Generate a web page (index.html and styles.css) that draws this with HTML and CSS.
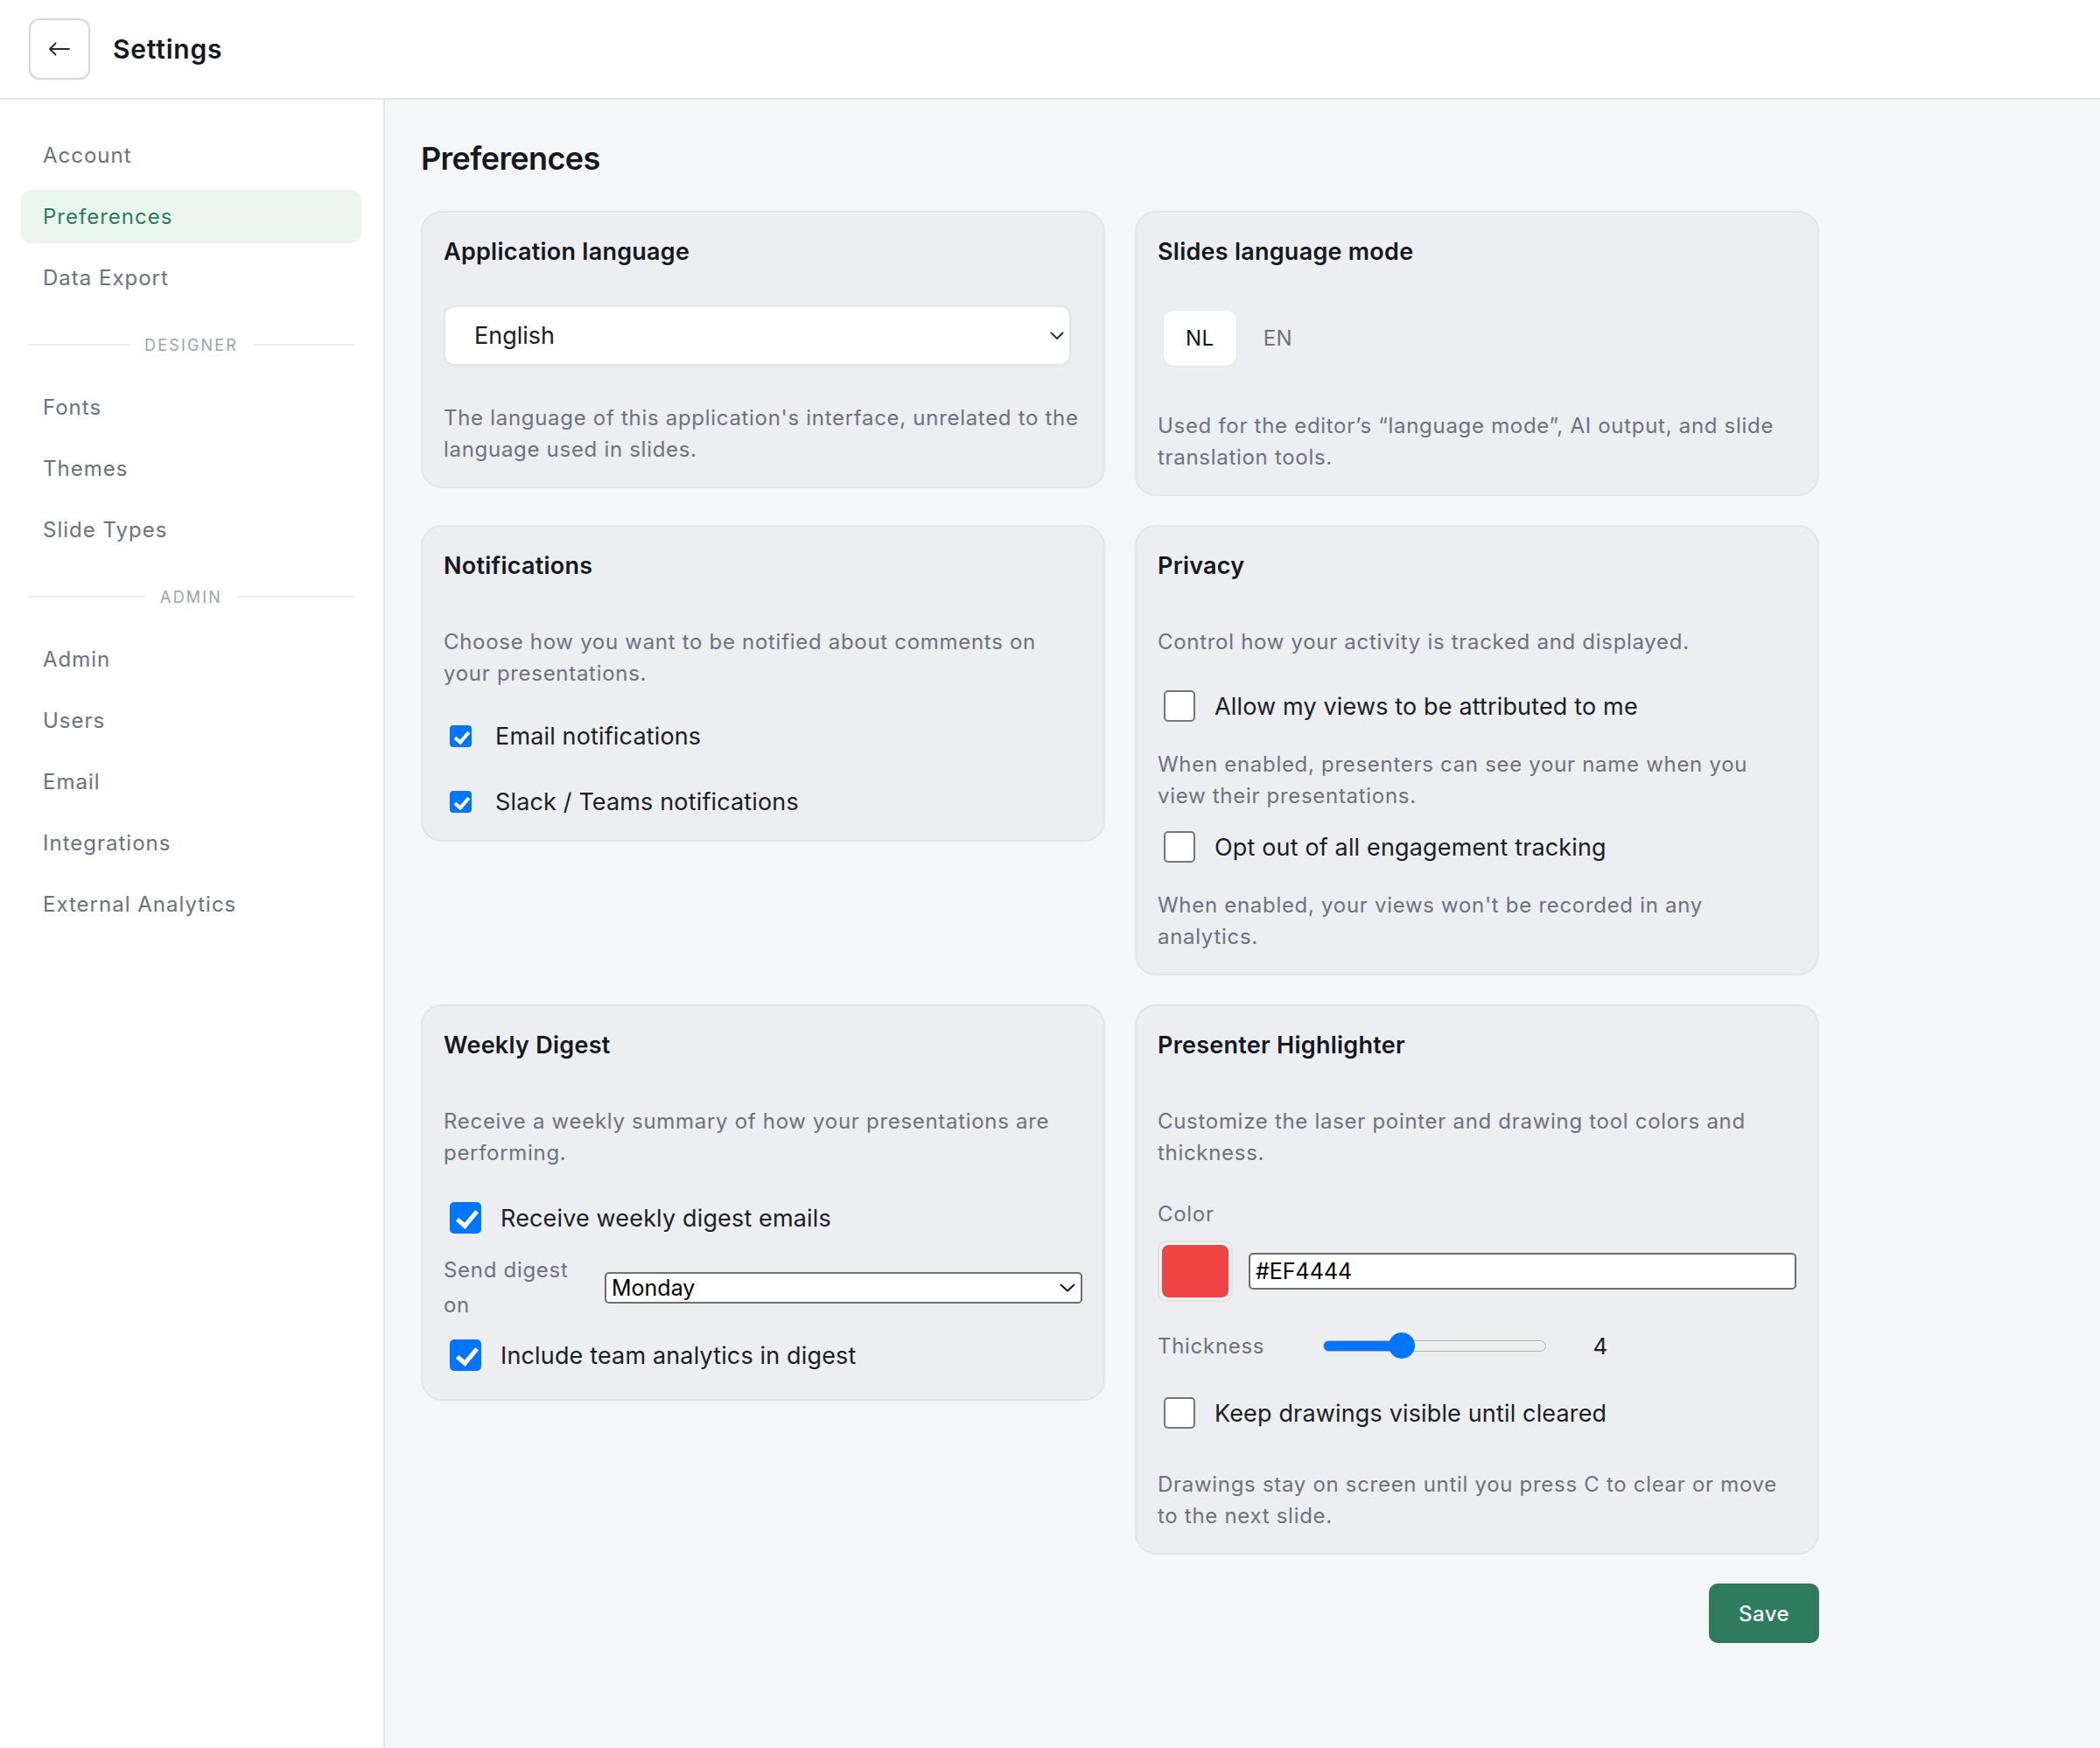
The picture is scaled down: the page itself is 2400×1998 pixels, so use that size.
FILE: index.html
```html
<!DOCTYPE html>
<html lang="en">
<head>
    <meta charset="UTF-8">
    <meta name="viewport" content="width=device-width, initial-scale=1.0">
    <title>Settings</title>
    <link rel="stylesheet" href="styles.css">
</head>
<body>
    <header class="topbar">
        <button class="back-btn" aria-label="Back">
            <svg width="26" height="16" viewBox="0 0 26 16" fill="none" stroke="#1f2937" stroke-width="1.8" stroke-linecap="round" stroke-linejoin="round">
                <path d="M24 8H2M8.5 1.5L2 8l6.5 6.5"/>
            </svg>
        </button>
        <h1 class="topbar-title">Settings</h1>
    </header>

    <div class="layout">
        <nav class="sidebar">
            <a class="nav-item">Account</a>
            <a class="nav-item active">Preferences</a>
            <a class="nav-item">Data Export</a>

            <div class="nav-divider"><span>Designer</span></div>

            <a class="nav-item">Fonts</a>
            <a class="nav-item">Themes</a>
            <a class="nav-item">Slide Types</a>

            <div class="nav-divider"><span>Admin</span></div>

            <a class="nav-item">Admin</a>
            <a class="nav-item">Users</a>
            <a class="nav-item">Email</a>
            <a class="nav-item">Integrations</a>
            <a class="nav-item">External Analytics</a>
        </nav>

        <main class="main">
            <div class="content">
                <h2 class="page-title">Preferences</h2>

                <div class="card-grid">
                    <!-- Application language -->
                    <section class="card">
                        <h3 class="card-title">Application language</h3>
                        <div class="select-wrap lang-select">
                            <select class="select-soft">
                                <option>English</option>
                                <option>Nederlands</option>
                            </select>
                            <svg class="chevron" width="16" height="10" viewBox="0 0 16 10" fill="none" stroke="#1f2937" stroke-width="1.8" stroke-linecap="round" stroke-linejoin="round"><path d="M1.5 1.5L8 8l6.5-6.5"/></svg>
                        </div>
                        <p class="card-desc after-select">The language of this application's interface, unrelated to the language used in slides.</p>
                    </section>

                    <!-- Slides language mode -->
                    <section class="card">
                        <h3 class="card-title">Slides language mode</h3>
                        <div class="toggle">
                            <button class="toggle-btn active">NL</button>
                            <button class="toggle-btn">EN</button>
                        </div>
                        <p class="card-desc after-toggle">Used for the editor’s “language mode”, AI output, and slide translation tools.</p>
                    </section>

                    <!-- Notifications -->
                    <section class="card">
                        <h3 class="card-title">Notifications</h3>
                        <p class="card-desc intro">Choose how you want to be notified about comments on your presentations.</p>
                        <label class="check-row small first">
                            <input type="checkbox" class="check" checked>
                            <span>Email notifications</span>
                        </label>
                        <label class="check-row small next">
                            <input type="checkbox" class="check" checked>
                            <span>Slack / Teams notifications</span>
                        </label>
                    </section>

                    <!-- Privacy -->
                    <section class="card">
                        <h3 class="card-title">Privacy</h3>
                        <p class="card-desc intro">Control how your activity is tracked and displayed.</p>
                        <label class="check-row privacy-first">
                            <input type="checkbox" class="check">
                            <span>Allow my views to be attributed to me</span>
                        </label>
                        <p class="card-desc option-help">When enabled, presenters can see your name when you view their presentations.</p>
                        <label class="check-row privacy-next">
                            <input type="checkbox" class="check">
                            <span>Opt out of all engagement tracking</span>
                        </label>
                        <p class="card-desc option-help">When enabled, your views won't be recorded in any analytics.</p>
                    </section>

                    <!-- Weekly Digest -->
                    <section class="card">
                        <h3 class="card-title">Weekly Digest</h3>
                        <p class="card-desc intro">Receive a weekly summary of how your presentations are performing.</p>
                        <label class="check-row tall digest-first">
                            <input type="checkbox" class="check" checked>
                            <span>Receive weekly digest emails</span>
                        </label>
                        <div class="field-row digest-day">
                            <span class="field-label">Send digest on</span>
                            <div class="select-wrap plain">
                                <select class="select-plain">
                                    <option>Monday</option>
                                    <option>Tuesday</option>
                                    <option>Wednesday</option>
                                    <option>Thursday</option>
                                    <option>Friday</option>
                                </select>
                                <svg class="chevron" width="18" height="10" viewBox="0 0 18 10" fill="none" stroke="#111" stroke-width="1.8" stroke-linecap="round" stroke-linejoin="round"><path d="M1.5 1.5L9 8.5l7.5-7"/></svg>
                            </div>
                        </div>
                        <label class="check-row tall digest-next">
                            <input type="checkbox" class="check" checked>
                            <span>Include team analytics in digest</span>
                        </label>
                    </section>

                    <!-- Presenter Highlighter -->
                    <section class="card">
                        <h3 class="card-title">Presenter Highlighter</h3>
                        <p class="card-desc intro">Customize the laser pointer and drawing tool colors and thickness.</p>
                        <div class="color-label">Color</div>
                        <div class="color-row">
                            <div class="swatch"><div class="swatch-fill"></div></div>
                            <input type="text" class="hex-input" value="#EF4444">
                        </div>
                        <div class="thickness-row">
                            <span class="thickness-label">Thickness</span>
                            <input type="range" class="range" min="1" max="10" value="4" style="--fill: 35%">
                            <span class="thickness-value">4</span>
                        </div>
                        <label class="check-row keep-row">
                            <input type="checkbox" class="check">
                            <span>Keep drawings visible until cleared</span>
                        </label>
                        <p class="card-desc keep-help">Drawings stay on screen until you press C to clear or move to the next slide.</p>
                    </section>
                </div>

                <div class="actions">
                    <button class="save-btn">Save</button>
                </div>
            </div>
        </main>
    </div>
</body>
</html>
```

FILE: styles.css
```css
:root {
    --text-dark: #15181e;
    --text-muted: #6b7280;
    --nav-text: #6b7280;
    --line: #e4e6ea;
    --main-bg: #f5f6f8;
    --card-bg: #edeef2;
    --card-border: #e2e4e8;
    --green: #2e7b5f;
    --green-soft: #ebf5f0;
    --blue: #0075ff;
}

* {
    box-sizing: border-box;
}

html, body {
    margin: 0;
    padding: 0;
    height: 100%;
}

body {
    font-family: 'Inter', 'Noto Sans', Arial, sans-serif;
    color: var(--text-dark);
    background: var(--main-bg);
    display: flex;
    flex-direction: column;
}

/* top bar */
.topbar {
    height: 114px;
    flex-shrink: 0;
    background: #fff;
    border-bottom: 2px solid var(--line);
    display: flex;
    align-items: center;
    padding: 0 33px;
    gap: 26px;
}

.back-btn {
    width: 70px;
    height: 70px;
    border: 2px solid #d5d8dd;
    border-radius: 12px;
    background: #fff;
    display: flex;
    align-items: center;
    justify-content: center;
    box-shadow: 0 1px 2px rgba(0, 0, 0, 0.05);
    padding: 0;
}

.topbar-title {
    margin: 0;
    font-size: 30px;
    font-weight: 600;
    letter-spacing: 0.8px;
    color: var(--text-dark);
}

.layout {
    flex: 1;
    display: flex;
    min-height: 0;
}

/* sidebar */
.sidebar {
    width: 440px;
    flex-shrink: 0;
    background: #fff;
    border-right: 2px solid var(--line);
    padding: 33px 25px 0 24px;
    display: flex;
    flex-direction: column;
}

.nav-item {
    height: 61px;
    margin-bottom: 9px;
    padding-left: 25px;
    display: flex;
    align-items: center;
    font-size: 24px;
    letter-spacing: 1px;
    color: var(--nav-text);
    border-radius: 12px;
}

.nav-item.active {
    background: var(--green-soft);
    color: var(--green);
}

.nav-divider {
    height: 24px;
    margin: 25px 8px 29px;
    display: flex;
    align-items: center;
    gap: 17px;
    font-size: 18px;
    letter-spacing: 0.12em;
    text-transform: uppercase;
    color: #9ca3af;
}

.nav-divider::before,
.nav-divider::after {
    content: "";
    flex: 1;
    height: 2px;
    background: #eceef1;
}

/* main */
.main {
    flex: 1;
    padding: 44px 41px;
}

.content {
    width: 1598px;
}

.page-title {
    margin: 0 0 36px;
    font-size: 36px;
    line-height: 47px;
    font-weight: 600;
    letter-spacing: -0.6px;
    color: var(--text-dark);
}

.card-grid {
    display: grid;
    grid-template-columns: 1fr 1fr;
    gap: 33px 34px;
    align-items: start;
}

.card {
    background: var(--card-bg);
    border: 2px solid var(--card-border);
    border-radius: 24px;
    padding: 25px 24px 24px;
}

.card-title {
    margin: 0;
    font-size: 27px;
    line-height: 40px;
    font-weight: 600;
    letter-spacing: 0.25px;
    color: var(--text-dark);
}

.card-desc {
    margin: 0;
    font-size: 24px;
    line-height: 36px;
    letter-spacing: 0.7px;
    color: var(--text-muted);
}

.card-desc.intro { margin-top: 49px; }
.card-desc.after-select { margin-top: 42px; }
.card-desc.after-toggle { margin-top: 51px; }
.card-desc.option-help { margin-top: 29px; }
.card-desc.keep-help { margin-top: 44px; }

/* selects */
.select-wrap {
    position: relative;
}

.select-wrap .chevron {
    position: absolute;
    right: 8px;
    top: 50%;
    transform: translateY(-50%);
    pointer-events: none;
}

.lang-select {
    margin-top: 41px;
    width: 717px;
}

.select-soft {
    appearance: none;
    -webkit-appearance: none;
    width: 100%;
    height: 69px;
    padding: 0 40px 0 33px;
    font-family: inherit;
    font-size: 27px;
    color: #1b1e24;
    background: #fff;
    border: 2px solid #e4e6ea;
    border-radius: 12px;
    box-shadow: 0 1px 3px rgba(0, 0, 0, 0.04);
}

.select-plain {
    appearance: none;
    -webkit-appearance: none;
    width: 100%;
    height: 36px;
    padding: 0 34px 0 6px;
    font-family: inherit;
    font-size: 25px;
    color: #000;
    background: #fff;
    border: 2px solid #6f6f6f;
    border-radius: 5px;
}

/* NL / EN toggle */
.toggle {
    margin: 47px 0 0 7px;
    display: flex;
    gap: 6px;
}

.toggle-btn {
    height: 63px;
    min-width: 81px;
    padding: 0 25px;
    border: none;
    border-radius: 12px;
    background: transparent;
    font-family: inherit;
    font-size: 24px;
    letter-spacing: 0.5px;
    color: var(--text-muted);
}

.toggle-btn.active {
    background: #fff;
    color: var(--text-dark);
    box-shadow: 0 1px 3px rgba(0, 0, 0, 0.06);
}

/* checkboxes */
.check-row {
    display: flex;
    align-items: center;
    height: 40px;
    font-size: 27px;
    letter-spacing: 0.15px;
    color: #1b1e24;
}

.check-row.tall { height: 44px; }

.check {
    appearance: none;
    -webkit-appearance: none;
    position: relative;
    flex-shrink: 0;
    width: 36px;
    height: 36px;
    margin: 0 22px 0 7px;
    background: #fff;
    border: 2px solid #767676;
    border-radius: 5px;
}

.check:checked {
    background: var(--blue);
    border-color: var(--blue);
}

.check:checked::after {
    content: "";
    position: absolute;
    left: 11px;
    top: 3px;
    width: 9px;
    height: 19px;
    border: solid #fff;
    border-width: 0 5px 5px 0;
    transform: rotate(40deg);
}

.check-row.small .check {
    width: 25px;
    height: 25px;
    margin-right: 27px;
    border-radius: 4px;
}

.check-row.small .check:checked::after {
    left: 7px;
    top: 2px;
    width: 6px;
    height: 13px;
    border-width: 0 4px 4px 0;
}

.check-row.small.first { margin-top: 33px; }
.check-row.small.next { margin-top: 35px; }
.check-row.privacy-first { margin-top: 35px; }
.check-row.privacy-next { margin-top: 20px; }
.check-row.digest-first { margin-top: 34px; }
.check-row.digest-next { margin: 15px 0 4px; }
.check-row.keep-row { margin-top: 39px; }

/* send digest on */
.field-row {
    display: flex;
    align-items: center;
    gap: 24px;
}

.field-row.digest-day { margin-top: 18px; }

.field-label {
    width: 160px;
    flex-shrink: 0;
    font-size: 24px;
    line-height: 40px;
    letter-spacing: 0.7px;
    color: var(--text-muted);
}

.field-row .select-wrap {
    flex: 1;
}

/* highlighter */
.color-label {
    margin-top: 34px;
    font-size: 24px;
    line-height: 36px;
    letter-spacing: 0.7px;
    color: var(--text-muted);
}

.color-row {
    margin-top: 12px;
    display: flex;
    align-items: center;
    gap: 18px;
}

.swatch {
    width: 86px;
    height: 70px;
    padding: 3px;
    border: 2px solid #e0e1e5;
    border-radius: 10px;
    background: #f1f2f4;
    flex-shrink: 0;
}

.swatch-fill {
    width: 100%;
    height: 100%;
    background: #ef4444;
    border-radius: 8px;
}

.hex-input {
    flex: 1;
    height: 42px;
    padding: 0 6px;
    font-family: inherit;
    font-size: 25px;
    color: #000;
    background: #fff;
    border: 2px solid #6f6f6f;
    border-radius: 5px;
}

.thickness-row {
    margin-top: 32px;
    height: 36px;
    display: flex;
    align-items: center;
}

.thickness-label {
    width: 189px;
    font-size: 24px;
    letter-spacing: 0.7px;
    color: var(--text-muted);
}

.range {
    appearance: none;
    -webkit-appearance: none;
    width: 255px;
    height: 13px;
    margin: 0;
    border-radius: 7px;
    border: 1.5px solid #b3b3b3;
    background: linear-gradient(to right, var(--blue) 0, var(--blue) var(--fill), #efefef var(--fill), #efefef 100%);
}

.range::-webkit-slider-thumb {
    -webkit-appearance: none;
    width: 30px;
    height: 30px;
    border-radius: 50%;
    background: var(--blue);
    border: none;
}

.thickness-value {
    width: 56px;
    margin-left: 34px;
    text-align: center;
    font-size: 26px;
    color: #1b1e24;
}

/* save */
.actions {
    margin-top: 33px;
    display: flex;
    justify-content: flex-end;
}

.save-btn {
    width: 126px;
    height: 68px;
    border: none;
    border-radius: 10px;
    background: var(--green);
    color: #fff;
    font-family: inherit;
    font-size: 24px;
    font-weight: 500;
    letter-spacing: 0.4px;
}
```
